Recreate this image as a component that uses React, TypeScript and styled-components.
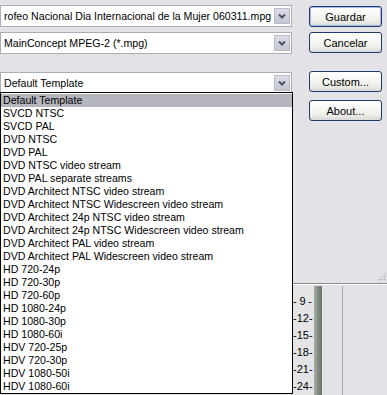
import styled, { createGlobalStyle } from 'styled-components';

const Global = createGlobalStyle`
  html, body { margin: 0; padding: 0; }
  body { background: #e3e2e6; }
`;

const templates = [
  'Default Template',
  'SVCD NTSC',
  'SVCD PAL',
  'DVD NTSC',
  'DVD PAL',
  'DVD NTSC video stream',
  'DVD PAL separate streams',
  'DVD Architect NTSC video stream',
  'DVD Architect NTSC Widescreen video stream',
  'DVD Architect 24p NTSC video stream',
  'DVD Architect 24p NTSC Widescreen video stream',
  'DVD Architect PAL video stream',
  'DVD Architect PAL Widescreen video stream',
  'HD 720-24p',
  'HD 720-30p',
  'HD 720-60p',
  'HD 1080-24p',
  'HD 1080-30p',
  'HD 1080-60i',
  'HDV 720-25p',
  'HDV 720-30p',
  'HDV 1080-50i',
  'HDV 1080-60i',
];

const marks = ['9', '12', '15', '18', '21', '24'];

const Window = styled.div`
  position: relative;
  width: 387px;
  height: 395px;
  overflow: hidden;
  background: #e3e2e6;
  font-family: "Liberation Sans", Arial, sans-serif;
  font-size: 10.6px;
  color: #000;
  display: flex;
  flex-direction: column;
`;

const Form = styled.div`
  display: grid;
  grid-template-columns: 292px 1fr;
  column-gap: 17px;
  padding: 5px 5px 0 0;
  height: 235px;
  box-sizing: border-box;
`;

const Fields = styled.div`
  display: flex;
  flex-direction: column;
`;

const Buttons = styled.div`
  display: flex;
  flex-direction: column;
  padding-top: 1px;
`;

const Combo = styled.div<{ $gap?: number }>`
  display: flex;
  align-items: center;
  height: 22px;
  box-sizing: border-box;
  margin-top: ${p => p.$gap ?? 0}px;
  background: #fff;
  border: 1px solid #a9aeb9;
  padding: 0 1px 0 3px;
`;

const ComboText = styled.span`
  flex: 1;
  white-space: nowrap;
  overflow: hidden;
`;

const Arrow = styled.div`
  width: 16px;
  height: 16px;
  display: flex;
  align-items: center;
  justify-content: center;
  background: linear-gradient(#dcdde6, #c4c6d2);
  border: 1px solid #b9bcc8;
  box-sizing: border-box;
`;

const Button = styled.button<{ $gap?: number; $def?: boolean }>`
  width: 73px;
  height: 21px;
  margin-top: ${p => p.$gap ?? 0}px;
  border: 1px solid #1c3b6b;
  border-radius: 3px;
  background: linear-gradient(#ffffff, #f0f0ea 70%, #d8d8d8);
  box-shadow: ${p => (p.$def ? 'inset 0 0 0 1px #a7b8e8' : 'none')};
  font: inherit;
  font-size: 11px;
  color: #000;
  padding: 0;
`;

const Lower = styled.div`
  flex: 1;
  display: flex;
  margin-left: 292px;
  flex-direction: column;
`;

const Panel = styled.div`
  height: 57px;
  position: relative;
  border-bottom: 1px solid #8c8c90;
  box-shadow: 0 1px 0 #fff;
`;

const Grip = styled.div`
  position: absolute;
  right: 1px;
  bottom: 2px;
  width: 9px;
  height: 9px;
  background-image: radial-gradient(circle, #b8b8c0 45%, transparent 50%);
  background-size: 3px 3px;
  clip-path: polygon(100% 0, 100% 100%, 0 100%);
`;

const Track = styled.div`
  flex: 1;
  display: flex;
  margin-top: 2px;
`;

const Ruler = styled.div`
  width: 22px;
  background: #e4e4e6;
  display: flex;
  flex-direction: column;
  padding-top: 7px;
`;

const Mark = styled.div`
  height: 17px;
  line-height: 17px;
  display: flex;
  justify-content: space-between;
  padding: 0 2px 0 1px;
  font-size: 11px;
`;

const Bar = styled.div`
  width: 8px;
  background: linear-gradient(90deg, #a9b1a9, #7b857b 60%, #6b746b);
`;

const Lane = styled.div<{ $w?: number }>`
  width: ${p => (p.$w ? `${p.$w}px` : 'auto')};
  flex: ${p => (p.$w ? 'none' : 1)};
  border-right: ${p => (p.$w ? '1px solid #a8a8ac' : 'none')};
  background: #e3e2e6;
`;

const List = styled.ul`
  position: absolute;
  left: 0;
  top: 92px;
  width: 293px;
  height: 302px;
  margin: 0;
  padding: 1px 0 0 0;
  box-sizing: border-box;
  list-style: none;
  background: #fff;
  border: 1px solid #000;
`;

const Item = styled.li<{ $sel?: boolean }>`
  height: 13px;
  line-height: 13px;
  padding-left: 2px;
  white-space: nowrap;
  background: ${p => (p.$sel ? '#b5b5bd' : 'transparent')};
`;

const Chevron = () => (
  <svg width="8" height="6" viewBox="0 0 8 6">
    <path d="M1 1.5 L4 4.5 L7 1.5" fill="none" stroke="#4d5266" strokeWidth="2" />
  </svg>
);

export default function App() {
  return (
    <Window>
      <Global />
      <Form>
        <Fields>
          <Combo $gap={0}>
            <ComboText>rofeo Nacional Dia Internacional de la Mujer 060311.mpg</ComboText>
            <Arrow><Chevron /></Arrow>
          </Combo>
          <Combo $gap={5}>
            <ComboText>MainConcept MPEG-2 (*.mpg)</ComboText>
            <Arrow><Chevron /></Arrow>
          </Combo>
          <Combo $gap={18}>
            <ComboText>Default Template</ComboText>
            <Arrow><Chevron /></Arrow>
          </Combo>
        </Fields>
        <Buttons>
          <Button $def>Guardar</Button>
          <Button $gap={5}>Cancelar</Button>
          <Button $gap={18}>Custom...</Button>
          <Button $gap={8}>About...</Button>
        </Buttons>
      </Form>
      <Lower>
        <Panel>
          <Grip />
        </Panel>
        <Track>
          <Ruler>
            {marks.map(m => (
              <Mark key={m}>
                <span>-</span>
                <span>{m}</span>
                <span>-</span>
              </Mark>
            ))}
          </Ruler>
          <Bar />
          <Lane $w={20} />
          <Lane />
        </Track>
      </Lower>
      <List>
        {templates.map((t, i) => (
          <Item key={t} $sel={i === 0}>{t}</Item>
        ))}
      </List>
    </Window>
  );
}
